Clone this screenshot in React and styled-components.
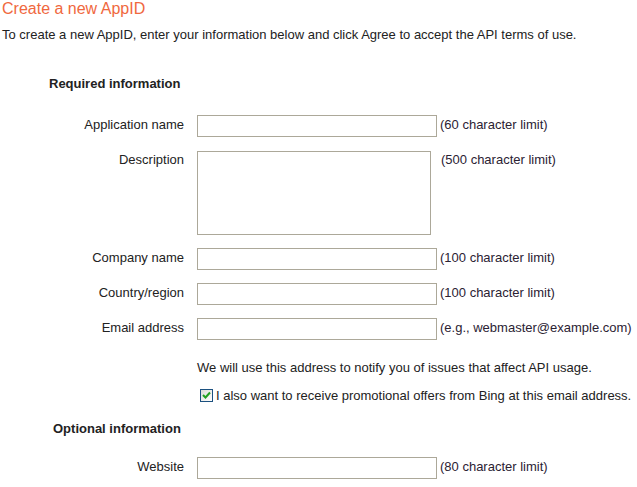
import React from "react";
import styled, { createGlobalStyle } from "styled-components";

const GlobalStyle = createGlobalStyle`
  html, body {
    margin: 0;
    padding: 0;
    background: #fff;
  }
  body {
    font-family: "Liberation Sans", Arial, sans-serif;
    font-size: 13px;
    color: #222;
  }
`;

const Page = styled.div`
  padding: 0 0 0 2px;
`;

const Title = styled.h1`
  margin: 0;
  font-size: 16px;
  line-height: 18px;
  font-weight: normal;
  color: #f0683e;
`;

const Intro = styled.p`
  margin: 9px 0 0;
  line-height: 15px;
`;

const SectionHeading = styled.h2`
  margin: ${({ top }) => top}px 0 0 ${({ indent }) => indent}px;
  font-size: 13px;
  line-height: 15px;
  font-weight: bold;
  color: #222;
`;

const Row = styled.div`
  display: flex;
  align-items: ${({ tall }) => (tall ? "flex-start" : "center")};
  margin-top: ${({ top }) => top}px;
`;

const Label = styled.label`
  width: 182px;
  text-align: right;
  padding-top: ${({ tall }) => (tall ? "1px" : "0")};
  padding-bottom: ${({ tall }) => (tall ? "0" : "3px")};
`;

const TextInput = styled.input`
  box-sizing: border-box;
  width: 240px;
  height: 22px;
  margin: 0 3px 0 13px;
  border: 1px solid #aca899;
  background: #fff;
  font: inherit;
`;

const TextArea = styled.textarea`
  box-sizing: border-box;
  width: 234px;
  height: 84px;
  margin: 0 10px 0 13px;
  border: 1px solid #aca899;
  background: #fff;
  resize: none;
  font: inherit;
`;

const Hint = styled.span`
  color: #2b2233;
  padding-bottom: ${({ tall }) => (tall ? "0" : "3px")};
  padding-top: ${({ tall }) => (tall ? "1px" : "0")};
  white-space: nowrap;
`;

const Note = styled.p`
  margin: ${({ top }) => top}px 0 0 195px;
  line-height: 15px;
  white-space: nowrap;
`;

const CheckRow = styled.div`
  display: flex;
  align-items: center;
  gap: 3px;
  margin: 13px 0 0 198px;
  white-space: nowrap;
`;

const CheckBox = styled.span`
  width: 13px;
  height: 13px;
  box-sizing: border-box;
  border: 1px solid #1c5180;
  background: linear-gradient(135deg, #dcdcd7, #fff);
  display: flex;
  align-items: center;
  justify-content: center;
`;

const Field = ({ label, hint, top }) => (
  <Row top={top}>
    <Label>{label}</Label>
    <TextInput type="text" />
    <Hint>{hint}</Hint>
  </Row>
);

export default function App() {
  return (
    <Page>
      <GlobalStyle />
      <Title>Create a new AppID</Title>
      <Intro>
        To create a new AppID, enter your information below and click Agree to
        accept the API terms of use.
      </Intro>

      <SectionHeading top={34} indent={47}>
        Required information
      </SectionHeading>

      <Field top={24} label="Application name" hint="(60 character limit)" />

      <Row top={14} tall>
        <Label tall>Description</Label>
        <TextArea />
        <Hint tall>(500 character limit)</Hint>
      </Row>

      <Field top={13} label="Company name" hint="(100 character limit)" />
      <Field top={13} label="Country/region" hint="(100 character limit)" />
      <Field
        top={13}
        label="Email address"
        hint="(e.g., webmaster@example.com)"
      />

      <Note top={20}>
        We will use this address to notify you of issues that affect API usage.
      </Note>

      <CheckRow>
        <CheckBox>
          <svg width="9" height="9" viewBox="0 0 9 9">
            <path
              d="M1 4 L3.5 6.5 L8 1.5"
              fill="none"
              stroke="#21a121"
              strokeWidth="2"
            />
          </svg>
        </CheckBox>
        <span>
          I also want to receive promotional offers from Bing at this email
          address.
        </span>
      </CheckRow>

      <SectionHeading top={18} indent={51}>
        Optional information
      </SectionHeading>

      <Field top={21} label="Website" hint="(80 character limit)" />
    </Page>
  );
}
